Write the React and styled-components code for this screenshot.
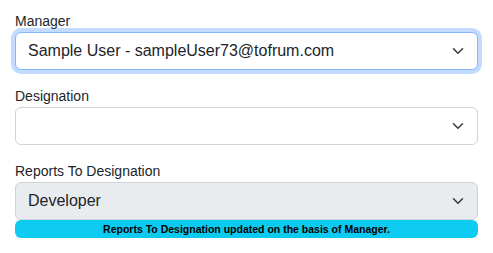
import React from "react";
import styled, { createGlobalStyle } from "styled-components";

const Global = createGlobalStyle`
  html, body { margin: 0; padding: 0; background: #fff; }
  body {
    font-family: "Liberation Sans", Arial, sans-serif;
    color: #212529;
    font-size: 16px;
    line-height: 1.5;
  }
`;

const Form = styled.div`
  padding: 11px 15px 0 15px;
  display: flex;
  flex-direction: column;
  gap: 16px;
`;

const Group = styled.div`
  display: flex;
  flex-direction: column;
`;

const Label = styled.label`
  font-size: 14px;
  line-height: 21px;
  color: #212529;
`;

const SelectWrap = styled.div`
  position: relative;
`;

const Select = styled.select`
  display: block;
  width: 100%;
  box-sizing: border-box;
  appearance: none;
  -webkit-appearance: none;
  height: 38px;
  padding: 6px 36px 6px 12px;
  font-family: "Liberation Sans", Arial, sans-serif;
  font-size: 16px;
  line-height: 1.5;
  color: #212529;
  background: ${(p) => (p.disabled ? "#e9ecef" : "#fff")};
  border: 1px solid ${(p) => (p.$focused ? "#86b7fe" : "#ced4da")};
  border-radius: 6px;
  box-shadow: ${(p) => (p.$focused ? "0 0 0 4px rgba(13,110,253,0.25)" : "none")};
  outline: none;
  opacity: 1;
`;

const Chevron = styled.svg`
  position: absolute;
  right: 12px;
  top: 50%;
  margin-top: -6px;
  width: 16px;
  height: 12px;
  pointer-events: none;
`;

const Notice = styled.div`
  background: #0dcaf0;
  color: #000;
  font-weight: 700;
  font-size: 10.5px;
  line-height: 1;
  padding: 3.7px 7px;
  border-radius: 6px;
  text-align: center;
  white-space: nowrap;
`;

const Arrow = () => (
  <Chevron viewBox="0 0 16 16" preserveAspectRatio="xMidYMid meet">
    <path
      d="m2 5 6 6 6-6"
      fill="none"
      stroke="#343a40"
      strokeWidth="2"
      strokeLinecap="round"
      strokeLinejoin="round"
    />
  </Chevron>
);

const Field = ({ label, value, options, focused, disabled, children }) => (
  <Group>
    <Label>{label}</Label>
    <SelectWrap>
      <Select value={value} $focused={focused} disabled={disabled} onChange={() => {}}>
        {options.map((o) => (
          <option key={o} value={o}>
            {o}
          </option>
        ))}
      </Select>
      <Arrow />
    </SelectWrap>
    {children}
  </Group>
);

export default function App() {
  return (
    <>
      <Global />
      <Form>
        <Field
          label="Manager"
          value="Sample User - sampleUser73@tofrum.com"
          options={["Sample User - sampleUser73@tofrum.com"]}
          focused
        />
        <Field label="Designation" value="" options={[""]} />
        <Field
          label="Reports To Designation"
          value="Developer"
          options={["Developer"]}
          disabled
        >
          <Notice>Reports To Designation updated on the basis of Manager.</Notice>
        </Field>
      </Form>
    </>
  );
}
